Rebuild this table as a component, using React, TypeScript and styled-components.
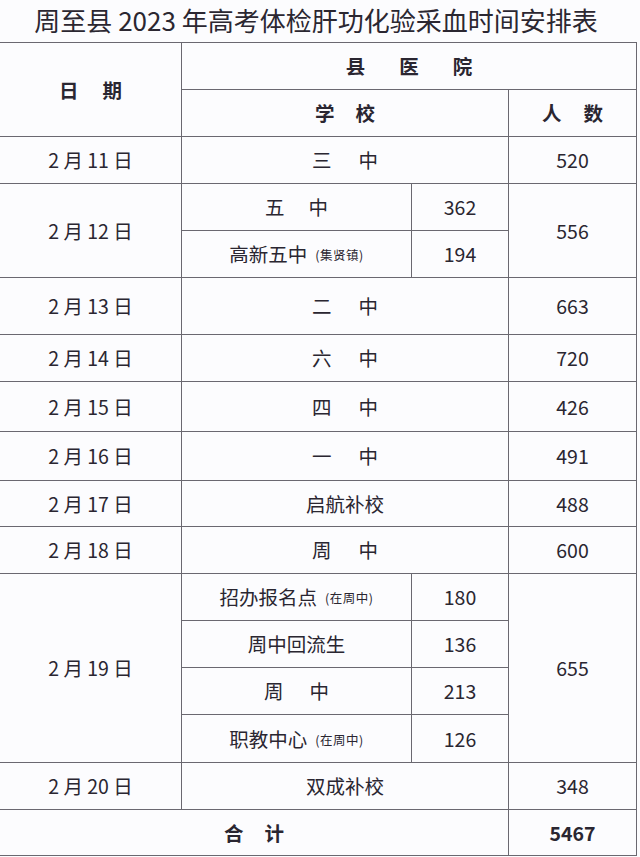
import React from 'react';
import styled, { createGlobalStyle } from 'styled-components';

const GlobalStyle = createGlobalStyle`
   html, body {
      margin: 0;
      padding: 0;
      background: #fcfcfe;
   }
   body {
      font-family: "Noto Sans CJK SC", "Noto Sans", sans-serif;
      color: #2a2631;
   }
`;

const Page = styled.div`
   width: 640px;
   height: 857px;
   overflow: hidden;
   background: #fcfcfe;
`;

const Title = styled.h1`
   margin: 0;
   width: 632px;
   height: 42px;
   font-size: 26px;
   font-weight: 400;
   line-height: 40px;
   text-align: center;
   white-space: nowrap;
   color: #2b2731;
`;

const Table = styled.table`
   width: 637px;
   border-collapse: collapse;
   table-layout: fixed;
   margin-left: -1px;
`;

const Row = styled.tr<{ $h: number }>`
   height: ${(p) => p.$h}px;
`;

const Cell = styled.td<{ $bold?: boolean }>`
   border: 1.5px solid #6a6870;
   padding: 0;
   text-align: center;
   vertical-align: middle;
   font-size: 19.5px;
   font-weight: ${(p) => (p.$bold ? 700 : 400)};
   line-height: 1;
   white-space: nowrap;
   color: #2a2631;
`;

const Spread = styled.span<{ $gap: number }>`
   display: inline-flex;
   gap: ${(p) => p.$gap}px;
`;

const Note = styled.span`
   font-size: 12.5px;
   margin-left: 8px;
   vertical-align: 2px;
   letter-spacing: 0.5px;
`;

const Spaced = ({ text, gap }: { text: string; gap: number }) => (
   <Spread $gap={gap}>
      {text.split('').map((c, i) => (
         <span key={i}>{c}</span>
      ))}
   </Spread>
);

type Single = { date: string; school: string; gap?: number; count: number; h: number };

const singles: Single[] = [
   { date: '2 月 13 日', school: '二中', gap: 27, count: 663, h: 57 },
   { date: '2 月 14 日', school: '六中', gap: 27, count: 720, h: 47 },
   { date: '2 月 15 日', school: '四中', gap: 27, count: 426, h: 50 },
   { date: '2 月 16 日', school: '一中', gap: 27, count: 491, h: 49 },
   { date: '2 月 17 日', school: '启航补校', count: 488, h: 46 },
   { date: '2 月 18 日', school: '周中', gap: 27, count: 600, h: 47 }
];

const SchoolText = ({ school, gap }: { school: string; gap?: number }) =>
   gap ? <Spaced text={school} gap={gap} /> : <>{school}</>;

export default function App() {
   return (
      <Page>
         <GlobalStyle />
         <Title>周至县 2023 年高考体检肝功化验采血时间安排表</Title>
         <Table>
            <colgroup>
               <col style={{ width: 182 }} />
               <col style={{ width: 230 }} />
               <col style={{ width: 97 }} />
               <col style={{ width: 128 }} />
            </colgroup>
            <tbody>
               <Row $h={47}>
                  <Cell rowSpan={2} $bold>
                     <Spaced text="日期" gap={24} />
                  </Cell>
                  <Cell colSpan={3} $bold>
                     <Spaced text="县医院" gap={34} />
                  </Cell>
               </Row>
               <Row $h={47}>
                  <Cell colSpan={2} $bold>
                     <Spaced text="学校" gap={21} />
                  </Cell>
                  <Cell $bold>
                     <Spaced text="人数" gap={22} />
                  </Cell>
               </Row>
               <Row $h={47}>
                  <Cell>2 月 11 日</Cell>
                  <Cell colSpan={2}>
                     <Spaced text="三中" gap={27} />
                  </Cell>
                  <Cell>520</Cell>
               </Row>
               <Row $h={47}>
                  <Cell rowSpan={2}>2 月 12 日</Cell>
                  <Cell>
                     <Spaced text="五中" gap={24} />
                  </Cell>
                  <Cell>362</Cell>
                  <Cell rowSpan={2}>556</Cell>
               </Row>
               <Row $h={47}>
                  <Cell>
                     高新五中<Note>(集贤镇)</Note>
                  </Cell>
                  <Cell>194</Cell>
               </Row>
               {singles.map((s) => (
                  <Row $h={s.h} key={s.date}>
                     <Cell>{s.date}</Cell>
                     <Cell colSpan={2}>
                        <SchoolText school={s.school} gap={s.gap} />
                     </Cell>
                     <Cell>{s.count}</Cell>
                  </Row>
               ))}
               <Row $h={47}>
                  <Cell rowSpan={4}>2 月 19 日</Cell>
                  <Cell>
                     招办报名点<Note>(在周中)</Note>
                  </Cell>
                  <Cell>180</Cell>
                  <Cell rowSpan={4}>655</Cell>
               </Row>
               <Row $h={47}>
                  <Cell>周中回流生</Cell>
                  <Cell>136</Cell>
               </Row>
               <Row $h={47}>
                  <Cell>
                     <Spaced text="周中" gap={26} />
                  </Cell>
                  <Cell>213</Cell>
               </Row>
               <Row $h={48}>
                  <Cell>
                     职教中心<Note>(在周中)</Note>
                  </Cell>
                  <Cell>126</Cell>
               </Row>
               <Row $h={47}>
                  <Cell>2 月 20 日</Cell>
                  <Cell colSpan={2}>双成补校</Cell>
                  <Cell>348</Cell>
               </Row>
               <Row $h={46}>
                  <Cell colSpan={3} $bold>
                     <Spaced text="合计" gap={21} />
                  </Cell>
                  <Cell $bold>5467</Cell>
               </Row>
            </tbody>
         </Table>
      </Page>
   );
}
